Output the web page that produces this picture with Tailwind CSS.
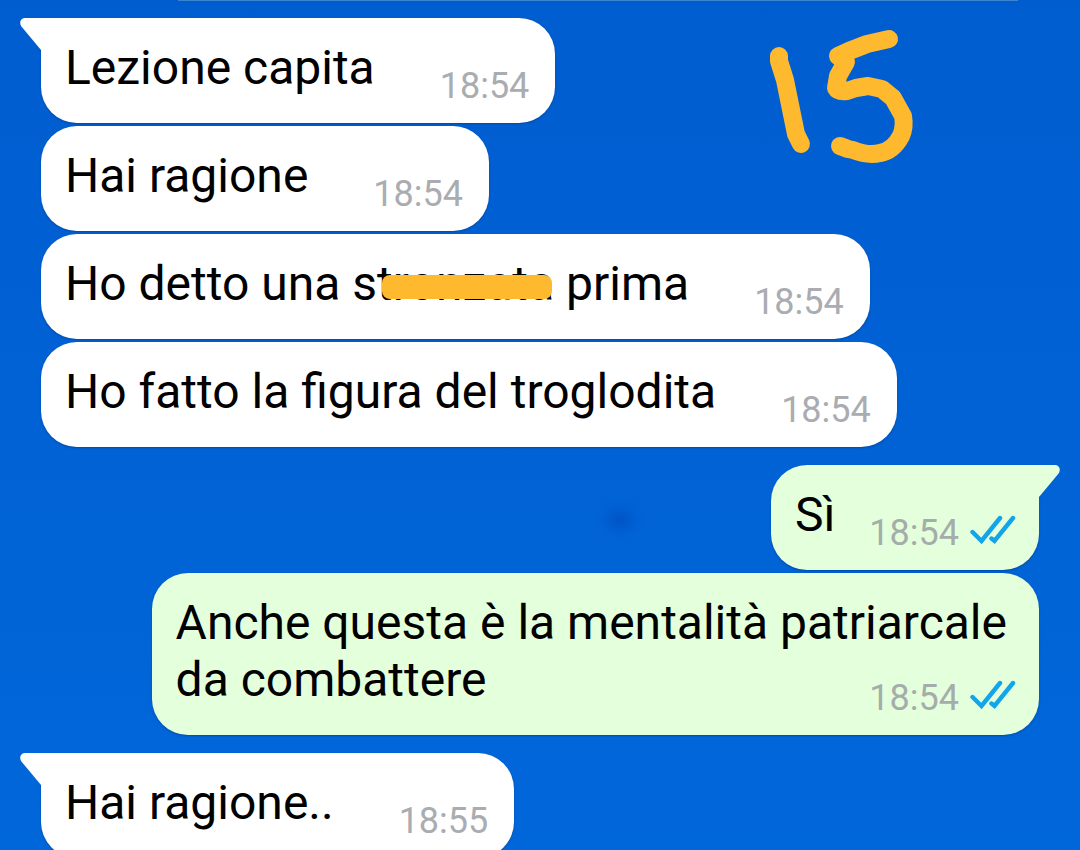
<!DOCTYPE html>
<html lang="it">
<head>
<meta charset="utf-8">
<meta name="viewport" content="width=device-width, initial-scale=1">
<title>Chat</title>
<script src="https://cdn.jsdelivr.net/npm/@tailwindcss/browser@4"></script>
</head>
<body class="relative h-screen overflow-hidden bg-linear-to-b from-[#005dd0] to-[#0067da] font-[Roboto,sans-serif] text-black">

<svg class="hidden" aria-hidden="true">
  <symbol id="tail" viewBox="0 0 22 34"><path d="M22 0H5C1 0-1 4 1 8L21 32L22 34Z"/></symbol>
  <symbol id="ticks" viewBox="0 0 46 30"><g fill="none" stroke="#12a5e9" stroke-width="4.4" stroke-linecap="round"><path d="M2.500 17L11.500 26L30 3" stroke-linejoin="miter"/><path d="M21.500 23.500L24.500 26L43 3"/></g></symbol>
</svg>

<!-- Lower edge of the message scrolled out above -->
<div class="ml-[178px] mr-[62px] h-px bg-[#3b85d0]"></div>

<main class="flex flex-col gap-[18px] pt-[17px] pl-[41px] pr-[41px] text-[48px] leading-[57px]">
  <section class="flex flex-col items-start gap-[3px]">
    <article class="relative flex items-end gap-[65px] rounded-[36px] rounded-tl-none bg-white pt-[21px] pb-4 pl-6 pr-[26px] shadow-[0_1px_2px_#003f90b0]">
      <svg class="absolute top-0 left-[-21px] h-[34px] w-[22px] fill-white" aria-hidden="true"><use href="#tail"/></svg>
      <p class="mb-[11px]">Lezione capita</p>
      <time class="text-[36px] leading-[42px] text-[#a9acb0]">18:54</time>
    </article>
    <article class="flex items-end gap-[65px] rounded-[36px] bg-white pt-[21px] pb-4 pl-6 pr-[26px] shadow-[0_1px_2px_#003f90b0]">
      <p class="mb-[11px]">Hai ragione</p>
      <time class="text-[36px] leading-[42px] text-[#a9acb0]">18:54</time>
    </article>
    <article class="flex items-end gap-[65px] rounded-[36px] bg-white pt-[21px] pb-4 pl-6 pr-[26px] shadow-[0_1px_2px_#003f90b0]">
      <p class="mb-[11px]">Ho detto una <span class="relative">stronzata<span class="absolute top-5 right-[2px] left-[30px] h-6 rounded-lg bg-[#ffb92e]"></span></span> prima</p>
      <time class="text-[36px] leading-[42px] text-[#a9acb0]">18:54</time>
    </article>
    <article class="flex items-end gap-[65px] rounded-[36px] bg-white pt-[21px] pb-4 pl-6 pr-[26px] shadow-[0_1px_2px_#003f90b0]">
      <p class="mb-[11px]">Ho fatto la figura del troglodita</p>
      <time class="text-[36px] leading-[42px] text-[#a9acb0]">18:54</time>
    </article>
  </section>

  <section class="flex flex-col items-end gap-[3px]">
    <article class="relative flex items-end gap-[34px] rounded-[36px] rounded-tr-none bg-[#e4ffdb] pt-[21px] pb-4 pl-6 pr-[23px] shadow-[0_1px_2px_#003f90b0]">
      <svg class="absolute top-0 right-[-21px] h-[34px] w-[22px] -scale-x-100 fill-[#e4ffdb]" aria-hidden="true"><use href="#tail"/></svg>
      <p class="mb-[11px]">Sì</p>
      <div class="flex items-center gap-[11px]">
        <time class="text-[36px] leading-[42px] text-[#a5adab]">18:54</time>
        <svg class="mb-[6px] h-[30px] w-[46px]" role="img" aria-label="Letto"><use href="#ticks"/></svg>
      </div>
    </article>
    <article class="grid rounded-[36px] bg-[#e4ffdb] pt-[21px] pb-4 pl-6 pr-[23px] shadow-[0_1px_2px_#003f90b0]">
      <p class="col-start-1 row-start-1 mb-[11px] pr-[9px]">Anche questa è la mentalità patriarcale<br>da combattere</p>
      <div class="col-start-1 row-start-1 flex items-center gap-[11px] self-end justify-self-end">
        <time class="text-[36px] leading-[42px] text-[#a5adab]">18:54</time>
        <svg class="mb-[6px] h-[30px] w-[46px]" role="img" aria-label="Letto"><use href="#ticks"/></svg>
      </div>
    </article>
  </section>

  <section class="flex flex-col items-start">
    <article class="relative flex items-end gap-[65px] rounded-[36px] rounded-tl-none bg-white pt-[21px] pb-4 pl-6 pr-[26px] shadow-[0_1px_2px_#003f90b0]">
      <svg class="absolute top-0 left-[-21px] h-[34px] w-[22px] fill-white" aria-hidden="true"><use href="#tail"/></svg>
      <p class="mb-[11px]">Hai ragione..</p>
      <time class="text-[36px] leading-[42px] text-[#a9acb0]">18:55</time>
    </article>
  </section>
</main>

<!-- Faint smudge in the wallpaper -->
<div class="absolute top-[512px] left-[608px] h-4 w-6 rounded-full bg-[#0047b8]/60 blur-[6px]"></div>

<!-- Handwritten number 15 -->
<svg class="absolute top-[20px] left-[760px] h-[150px] w-[165px]" viewBox="760 20 165 150" fill="none" stroke="#ffb92e" stroke-width="18" stroke-linecap="round" stroke-linejoin="round" role="img" aria-label="15">
  <path d="M779 56L779 61L785 80L796 134L801 144"/>
  <path d="M889 39L867 44L849 51L838 56L846 62L838 76L836 88Q838 92 847 91L856 88L868 86L882 89L893 98L903 116Q905 127 901 136Q893 151 880 153Q868 156 853 150L848 149L840 146"/>
</svg>
</body>
</html>
